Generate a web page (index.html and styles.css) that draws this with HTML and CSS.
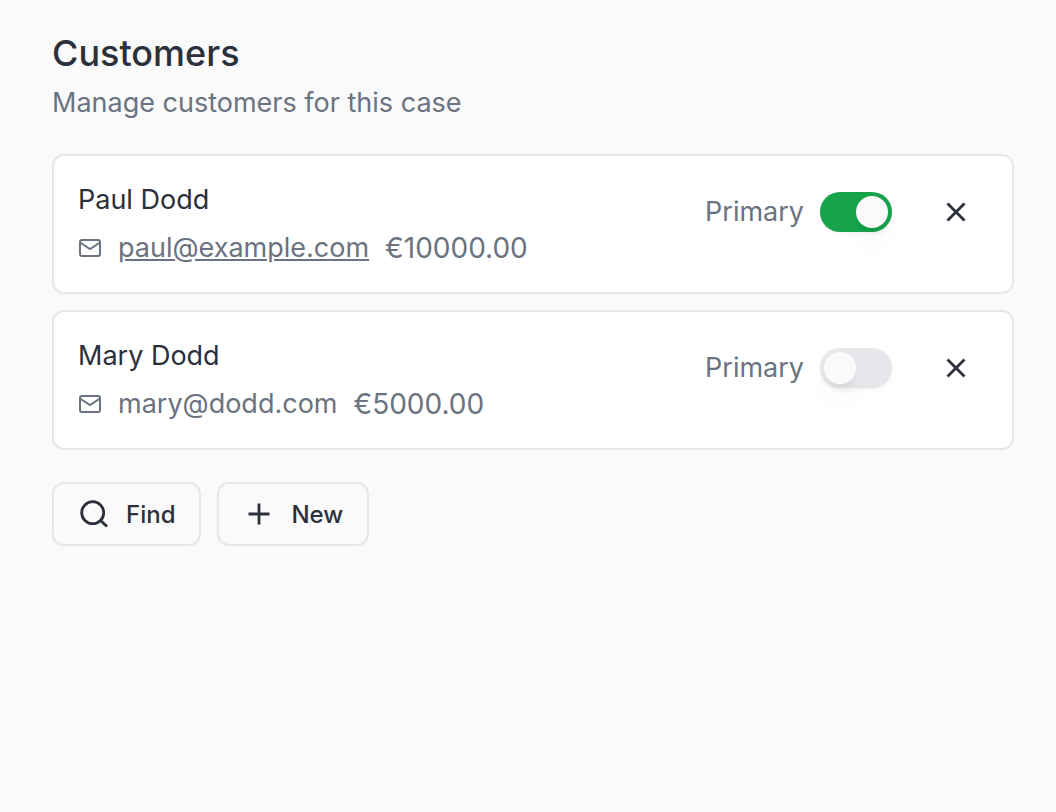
FILE: index.html
```
<!DOCTYPE html>
<html lang="en">
  <head>
    <meta charset="UTF-8" />
    <meta name="viewport" content="width=device-width, initial-scale=1.0" />
    <title>Customers</title>
    <link rel="stylesheet" href="styles.css">
  </head>
  <body>
    <main class="customers">
      <h1>Customers</h1>
      <p class="subtitle">Manage customers for this case</p>

      <ul class="customer-list">
        <li class="customer">
          <div class="customer-info">
            <div class="customer-name">Paul Dodd</div>
            <div class="customer-details">
              <svg class="mail-icon" viewBox="0 0 24 24" aria-hidden="true">
                <rect x="2" y="4" width="20" height="16" rx="2" />
                <path d="M2 6.5l10 6.5 10-6.5" />
              </svg>
              <a href="mailto:paul@example.com">paul@example.com</a>
              <span class="amount">€10000.00</span>
            </div>
          </div>
          <div class="customer-actions">
            <label for="primaryPaul">Primary</label>
            <input type="checkbox" role="switch" class="switch" id="primaryPaul" checked />
            <button type="button" class="remove" aria-label="Remove Paul Dodd">
              <svg viewBox="0 0 32 32" aria-hidden="true">
                <path d="M7.5 7.5l17 17M24.5 7.5l-17 17" />
              </svg>
            </button>
          </div>
        </li>

        <li class="customer">
          <div class="customer-info">
            <div class="customer-name">Mary Dodd</div>
            <div class="customer-details">
              <svg class="mail-icon" viewBox="0 0 24 24" aria-hidden="true">
                <rect x="2" y="4" width="20" height="16" rx="2" />
                <path d="M2 6.5l10 6.5 10-6.5" />
              </svg>
              <span>mary@dodd.com</span>
              <span class="amount">€5000.00</span>
            </div>
          </div>
          <div class="customer-actions">
            <label for="primaryMary">Primary</label>
            <input type="checkbox" role="switch" class="switch" id="primaryMary" />
            <button type="button" class="remove" aria-label="Remove Mary Dodd">
              <svg viewBox="0 0 32 32" aria-hidden="true">
                <path d="M7.5 7.5l17 17M24.5 7.5l-17 17" />
              </svg>
            </button>
          </div>
        </li>
      </ul>

      <div class="toolbar">
        <button type="button" class="tool-button">
          <svg viewBox="0 0 32 32" aria-hidden="true">
            <circle cx="14.7" cy="14.7" r="11" />
            <path d="M22.5 22.5l6.5 6" />
          </svg>
          Find
        </button>
        <button type="button" class="tool-button">
          <svg viewBox="0 0 32 32" aria-hidden="true">
            <path d="M16 5.5v21M5.5 16h21" />
          </svg>
          New
        </button>
      </div>
    </main>
  </body>
</html>
```

FILE: styles.css
```
* {
  box-sizing: border-box;
}

body {
  margin: 0;
  background-color: #fafafa;
  color: #2b303b;
  font-family: Inter, "Liberation Sans", sans-serif;
  font-size: 27px;
  line-height: 40px;
}

.customers {
  padding: 33px 42px 33px 52px;
}

h1 {
  margin: 0 0 10px;
  font-size: 36px;
  font-weight: 500;
  line-height: 40px;
}

.subtitle {
  margin: 0 0 31px;
  color: #6b7280;
}

.customer-list {
  display: flex;
  flex-direction: column;
  gap: 16px;
  margin: 0 0 32px;
  padding: 0;
  list-style: none;
}

.customer {
  display: flex;
  justify-content: space-between;
  align-items: flex-start;
  padding: 24px;
  background-color: white;
  border: 2px solid #e5e7eb;
  border-radius: 12px;
}

.customer-info {
  display: flex;
  flex-direction: column;
  gap: 8px;
}

.customer-details {
  display: flex;
  align-items: center;
  gap: 16px;
  color: #6b7280;
}

.customer-details a {
  color: inherit;
  text-decoration: underline;
}

.amount {
  font-size: 28px;
}

svg {
  flex-shrink: 0;
  width: 32px;
  height: 32px;
  fill: none;
  stroke: currentColor;
  stroke-width: 2.8;
}

.mail-icon {
  width: 24px;
  height: 24px;
  stroke-width: 2;
}

.customer-actions {
  display: flex;
  align-items: center;
  gap: 16px;
}

.customer-actions label {
  color: #6b7280;
}

.switch {
  appearance: none;
  width: 72px;
  height: 40px;
  margin: 0;
  padding: 4px;
  background-color: #e5e7eb;
  border-radius: 20px;
  box-shadow: 0 2px 4px rgba(0, 0, 0, 0.05);
  cursor: pointer;
}

.switch::before {
  content: "";
  display: block;
  width: 32px;
  height: 32px;
  background-color: #fafafa;
  border-radius: 50%;
  box-shadow: 0 20px 30px -6px rgba(0, 0, 0, 0.07), 0 8px 12px -6px rgba(0, 0, 0, 0.1);
}

.switch:checked {
  background-color: #16a34a;
}

.switch:checked::before {
  margin-left: 32px;
}

button {
  display: flex;
  align-items: center;
  justify-content: center;
  height: 64px;
  background: none;
  color: inherit;
  font-family: inherit;
  cursor: pointer;
}

.remove {
  width: 64px;
  margin-left: 16px;
  padding: 0;
  border: none;
}

.toolbar {
  display: flex;
  gap: 16px;
}

.tool-button {
  gap: 16px;
  padding: 0 24px;
  border: 2px solid #e5e7eb;
  border-radius: 12px;
  box-shadow: 0 1px 3px rgba(0, 0, 0, 0.03);
  font-size: 24px;
  font-weight: 500;
}
```
